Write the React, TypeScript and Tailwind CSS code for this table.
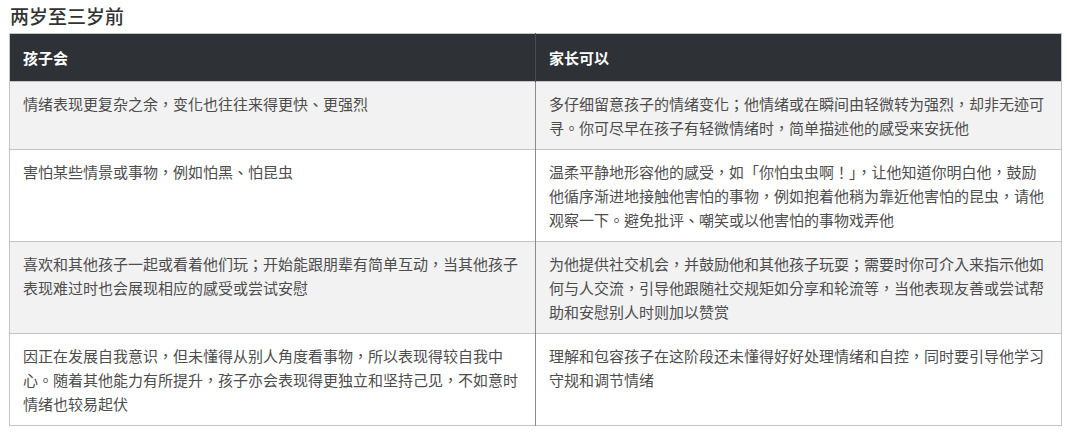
import React from 'react';

const rows: [string, string][] = [
  [
    '情绪表现更复杂之余，变化也往往来得更快、更强烈',
    '多仔细留意孩子的情绪变化；他情绪或在瞬间由轻微转为强烈，却非无迹可寻。你可尽早在孩子有轻微情绪时，简单描述他的感受来安抚他',
  ],
  [
    '害怕某些情景或事物，例如怕黑、怕昆虫',
    '温柔平静地形容他的感受，如「你怕虫虫啊！」，让他知道你明白他，鼓励他循序渐进地接触他害怕的事物，例如抱着他稍为靠近他害怕的昆虫，请他观察一下。避免批评、嘲笑或以他害怕的事物戏弄他',
  ],
  [
    '喜欢和其他孩子一起或看着他们玩；开始能跟朋辈有简单互动，当其他孩子表现难过时也会展现相应的感受或尝试安慰',
    '为他提供社交机会，并鼓励他和其他孩子玩耍；需要时你可介入来指示他如何与人交流，引导他跟随社交规矩如分享和轮流等，当他表现友善或尝试帮助和安慰别人时则加以赞赏',
  ],
  [
    '因正在发展自我意识，但未懂得从别人角度看事物，所以表现得较自我中心。随着其他能力有所提升，孩子亦会表现得更独立和坚持己见，不如意时情绪也较易起伏',
    '理解和包容孩子在这阶段还未懂得好好处理情绪和自控，同时要引导他学习守规和调节情绪',
  ],
];

export default function App() {
  return (
    <div
      lang="zh-Hant-TW"
      className="w-[1080px] h-[436px] bg-white pt-[2px] overflow-hidden"
      style={{ fontFamily: '"Noto Sans CJK TC", "Noto Sans CJK SC", sans-serif' }}
    >
      <h2 className="ml-[10px] mb-[3px] text-[19px] leading-[28px] font-medium text-[#333]">两岁至三岁前</h2>
      <table className="ml-[9px] w-[1053px] table-fixed border-collapse border border-[#c4c4c4] text-[15px] text-[#4d4d4d]">
        <thead>
          <tr className="bg-[#2e3136] text-white">
            <th className="w-1/2 px-[13px] py-[12px] text-left font-bold leading-[23px] border-r border-[#4a4d52]">孩子会</th>
            <th className="w-1/2 px-[13px] py-[12px] text-left font-bold leading-[23px]">家长可以</th>
          </tr>
        </thead>
        <tbody>
          {rows.map(([kid, parent], i) => (
            <tr key={i} className={`border-t border-[#c4c4c4] ${i % 2 === 0 ? 'bg-[#f2f2f2]' : 'bg-white'}`}>
              <td className="px-[13px] pt-[10px] pb-[9px] align-top leading-[24px] border-r border-[#8c8c8c]">{kid}</td>
              <td className="px-[13px] pt-[10px] pb-[9px] align-top leading-[24px]">{parent}</td>
            </tr>
          ))}
        </tbody>
      </table>
    </div>
  );
}
